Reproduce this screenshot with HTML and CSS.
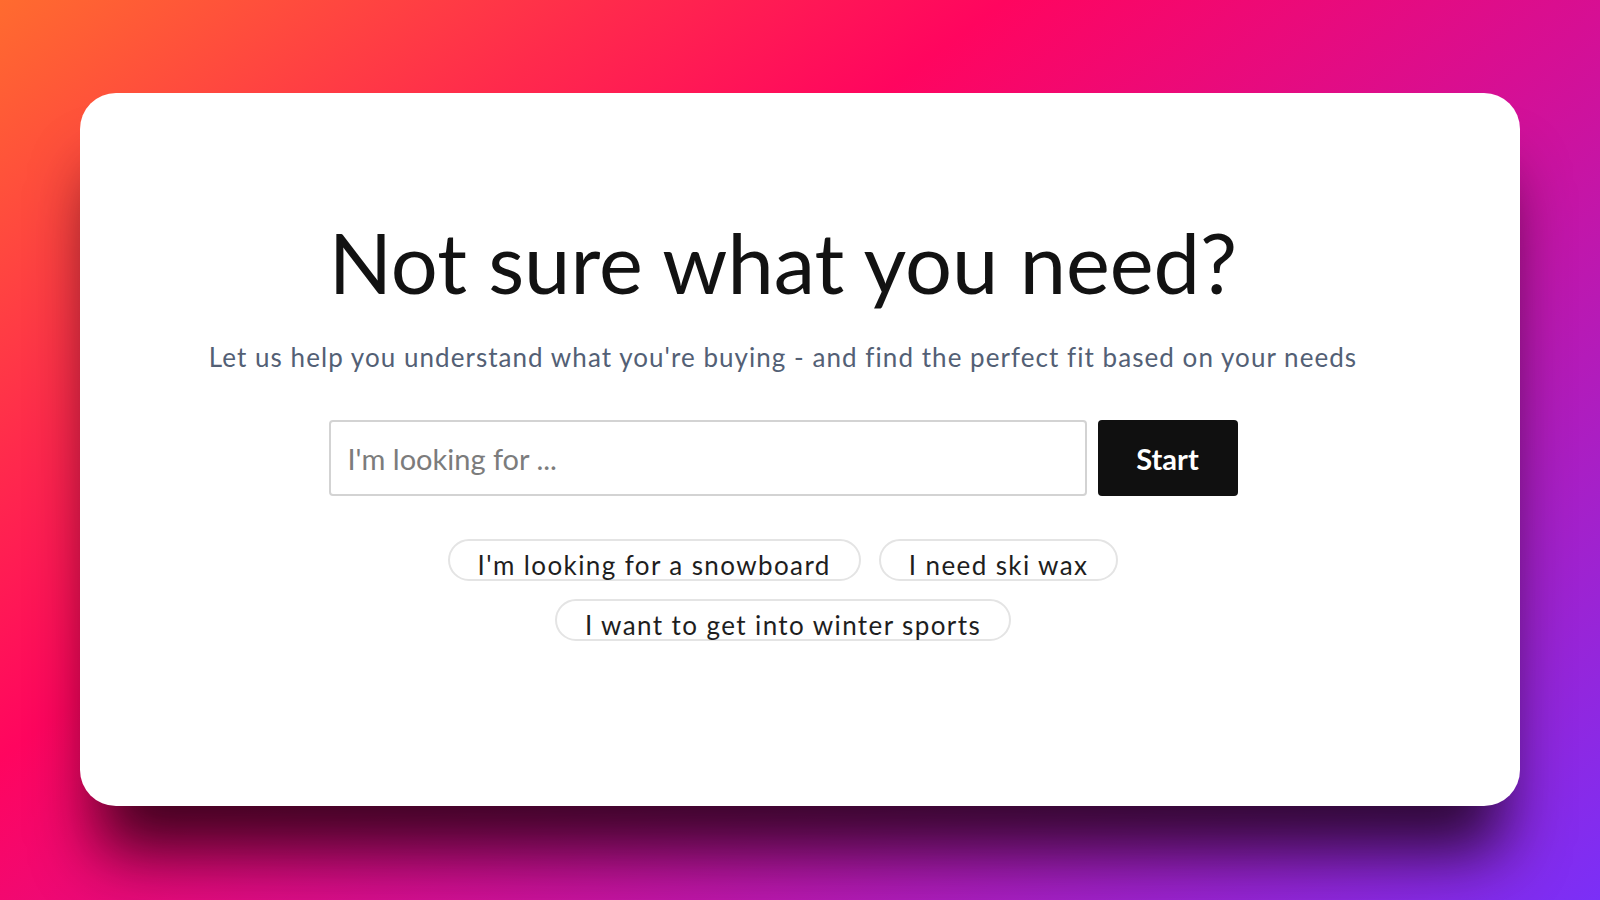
FILE: index.html
```html
<!DOCTYPE html>
<html lang=en>
<head>
  <meta charset=utf-8>
  <title>Not sure what you need?</title>
  <meta name=viewport content='width=device-width, initial-scale=1.0'>
<link rel="stylesheet" href="styles.css">
</head>
<body>
  <main class=card>
    <h1 class=title>Not sure what you need?</h1>
    <p class=lead>Let us help you understand what you're buying - and find the perfect fit based on your needs</p>

    <form class=search>
      <input class=query type=text placeholder="I'm looking for ...">
      <button class=start type=button>Start</button>
    </form>

    <div class=chips>
      <div class=chip-row>
        <button class=chip type=button>I'm looking for a snowboard</button>
        <button class=chip type=button>I need ski wax</button>
      </div>
      <div class=chip-row>
        <button class=chip type=button>I want to get into winter sports</button>
      </div>
    </div>
  </main>
</body>
</html>
```

FILE: styles.css
```css
/* page backdrop */

html, body {
  height: 100%;
}

body {
  margin: 0;
  padding-top: 93px;
  box-sizing: border-box;
  overflow: hidden;
  font-family: Lato, "Open Sans", sans-serif;
  background: linear-gradient(143deg, #ff6b2f 0%, #ff2a4c 22%, #ff055f 36%, #d60f94 58%, #7b2ff7 100%);
}

/* white card */

.card {
  height: 713px;
  margin: 0 80px;
  padding: 128px 34px 0 0;
  box-sizing: border-box;
  background: #fff;
  border-radius: 36px;
  box-shadow: 0 64px 64px -18px rgba(20, 0, 10, 0.8);
  display: flex;
  flex-direction: column;
  align-items: center;
}

.title {
  margin: 0;
  font-size: 83px;
  font-weight: 400;
  line-height: 1;
  color: #121212;
}

.lead {
  margin: 40px 0 0;
  font-size: 26px;
  line-height: 1;
  letter-spacing: 1.05px;
  color: #536075;
}

/* search bar */

.search {
  margin-top: 50px;
  display: flex;
  gap: 11px;
}

.query {
  width: 758px;
  height: 76px;
  box-sizing: border-box;
  padding: 0 17px;
  border: 2px solid #d3d3d3;
  border-radius: 4px;
  font: 400 29px Lato, sans-serif;
  color: #222;
}

.query::placeholder {
  color: #7c7c7c;
}

.start {
  width: 140px;
  height: 76px;
  border: 0;
  border-radius: 4px;
  background: #101010;
  color: #fff;
  font: 700 29px Lato, sans-serif;
}

/* suggestion chips */

.chips {
  margin-top: 43px;
  display: flex;
  flex-direction: column;
  align-items: center;
  gap: 18px;
}

.chip-row {
  display: flex;
  gap: 18px;
}

.chip {
  height: 42px;
  box-sizing: border-box;
  padding: 10px 28px 0;
  border: 2px solid #e4e4e4;
  border-radius: 21px;
  background: #fff;
  font: 400 26px/28px Lato, sans-serif;
  letter-spacing: 1.4px;
  color: #1e1e1e;
}
```
